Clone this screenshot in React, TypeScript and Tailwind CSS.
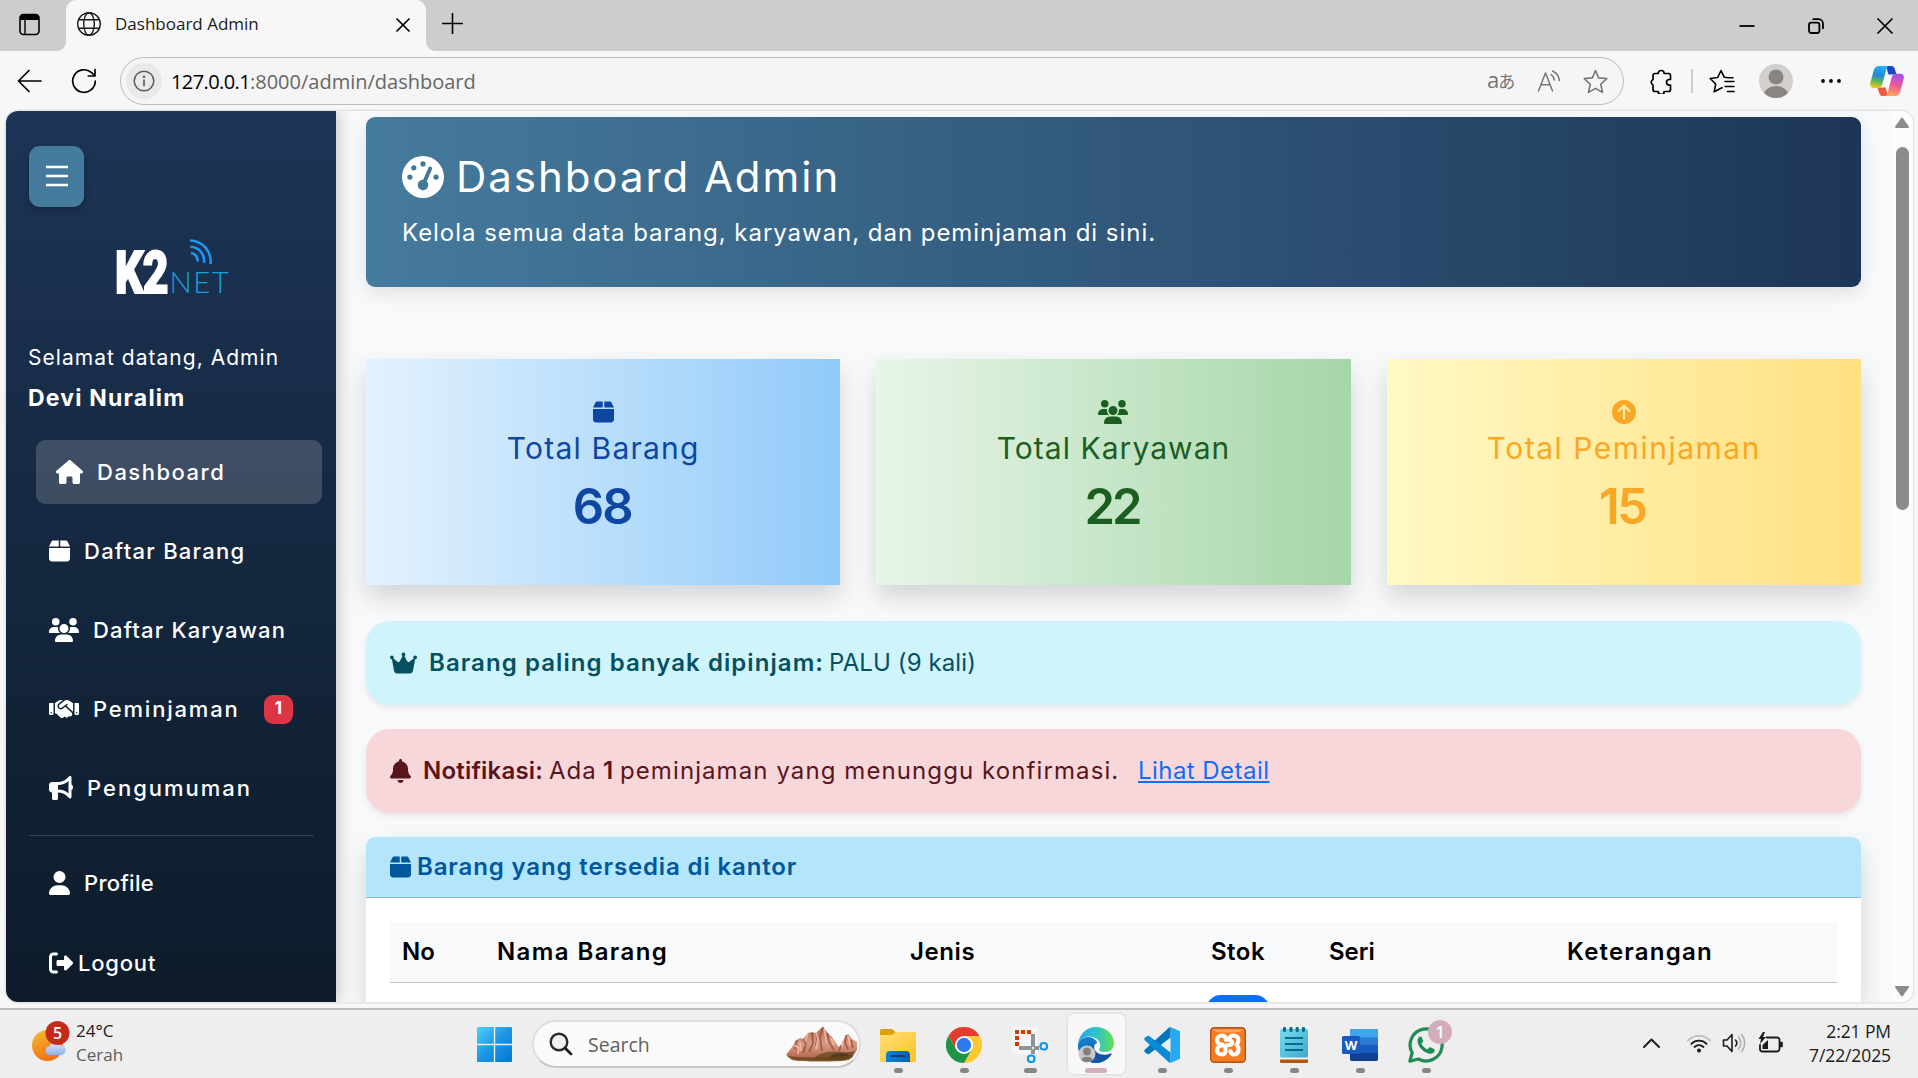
import React from 'react';
import {
  FaBell,
  FaBox,
  FaBullhorn,
  FaCircleArrowUp,
  FaCrown,
  FaGaugeHigh,
  FaHandshake,
  FaHouse,
  FaRightFromBracket,
  FaUser,
  FaUsers,
} from 'react-icons/fa6';

const stroke = { fill: 'none', stroke: 'currentColor', strokeLinecap: 'round', strokeLinejoin: 'round' } as const;

const STAR = 'M12 1.5 L15 8.5 L22.8 9.2 L17 14.6 L18.8 22.4 L12 18.6 L5.2 22.4 L7 14.6 L1.2 9.2 L9 8.5 Z';

function TabStrip() {
  return (
    <div className="flex h-[51px] shrink-0 bg-[#cdcdcd]">
      <div className="flex w-[66px] items-center pb-[3px] pl-[18px]">
        <svg className="h-[23px] w-[23px]" viewBox="0 0 23 23">
          <rect x="2" y="1.5" width="19" height="20" rx="3.5" {...stroke} strokeWidth="1.6" />
          <path d="M2 7V4.5a3 3 0 0 1 3-3h13a3 3 0 0 1 3 3V7z" />
          <path d="M7 7v14" {...stroke} strokeWidth="1.4" />
        </svg>
      </div>
      <div className="relative flex w-[360px] items-center rounded-t-[10px] bg-[#f7f7f7] pb-[3px] pl-[10px]">
        <svg className="absolute bottom-0 -left-[9px] h-[9px] w-[9px]" viewBox="0 0 9 9">
          <path d="M9 0V9H0A9 9 0 0 0 9 0Z" fill="#f7f7f7" />
        </svg>
        <svg className="absolute -right-[9px] bottom-0 h-[9px] w-[9px]" viewBox="0 0 9 9">
          <path d="M0 0V9H9A9 9 0 0 1 0 0Z" fill="#f7f7f7" />
        </svg>
        <svg className="h-[26px] w-[26px] text-[#1b1b1b]" viewBox="0 0 26 26">
          <g {...stroke} strokeWidth="1.4">
            <circle cx="13" cy="13" r="11.3" />
            <ellipse cx="13" cy="13" rx="5.3" ry="11.3" />
            <path d="M2.6 8.7h20.8M2.6 17.3h20.8" />
          </g>
        </svg>
        <span className="ml-[13px] flex-1 text-[17px] text-[#1b1b1b]">Dashboard Admin</span>
        <svg className="mt-[2px] mr-[16px] h-[14px] w-[14px]" viewBox="0 0 14 14">
          <path d="M1 1 13 13M13 1 1 13" {...stroke} strokeWidth="1.7" />
        </svg>
      </div>
      <div className="flex flex-1 items-center pb-[4px] pl-[16px]">
        <svg className="h-[21px] w-[21px]" viewBox="0 0 21 21">
          <path d="M10.5 0.5v20M0.5 10.5h20" {...stroke} strokeWidth="1.6" />
        </svg>
      </div>
      <div className="flex items-center gap-[53px] pr-[25px]">
        <svg className="h-4 w-4" viewBox="0 0 16 16">
          <path d="M0.5 8h15" stroke="black" strokeWidth="1.8" />
        </svg>
        <svg className="h-4 w-4" viewBox="0 0 16 16">
          <g {...stroke} strokeWidth="1.8">
            <rect x="1" y="4.6" width="10.4" height="10.4" rx="2.2" />
            <path d="M5.2 1.2h5.3a4.5 4.5 0 0 1 4.5 4.5v4.6" />
          </g>
        </svg>
        <svg className="h-4 w-4" viewBox="0 0 16 16">
          <path d="M1 1 15 15M15 1 1 15" {...stroke} strokeWidth="1.7" />
        </svg>
      </div>
    </div>
  );
}

function Copilot() {
  return (
    <svg className="h-[32px] w-[34px]" viewBox="0 0 34 32">
      <defs>
        <linearGradient id="cpA" x1="0.5" y1="0" x2="0.3" y2="1">
          <stop offset="0" stopColor="#22b4f5" />
          <stop offset="0.4" stopColor="#1f86dc" />
          <stop offset="0.7" stopColor="#5cb85a" />
          <stop offset="1" stopColor="#f5cc10" />
        </linearGradient>
        <linearGradient id="cpB" x1="0.6" y1="0" x2="0.4" y2="1">
          <stop offset="0" stopColor="#a14df0" />
          <stop offset="0.5" stopColor="#ee5a95" />
          <stop offset="1" stopColor="#ffa45c" />
        </linearGradient>
      </defs>
      <path d="M16 1h5.5c2 0 2.8 1.3 3.4 3.2L26.5 9.5h-8z" fill="#1a46c4" />
      <path d="M18 31h-5.5c-2 0-2.8-1.3-3.4-3.2L7.5 22.5h8z" fill="#ee5a3a" />
      <path d="M9 1h10.5c-2 0-2.7 1.5-3.2 3.2L12.6 18c-.8 3.3-2 5-4.6 5H4c-3.2 0-4.5-2.2-3.6-5.5L3.7 5.5C4.6 2.5 6 1 9 1z" fill="url(#cpA)" />
      <path d="M25 31H14.5c2 0 2.7-1.5 3.2-3.2L21.4 13.5c.8-3.3 2-4.7 4.6-4.7h4c3.2 0 4.5 2.2 3.6 5.5L30.3 26.5C29.4 29.5 28 31 25 31z" fill="url(#cpB)" />
    </svg>
  );
}

function Toolbar() {
  return (
    <div className="flex h-[60px] shrink-0 items-center bg-[#f7f7f7] pl-[17px]">
      <svg className="h-[24px] w-[25px]" viewBox="0 0 25 24">
        <path d="M24 12H1.5M12 1.5 1.5 12 12 22.5" {...stroke} strokeWidth="1.7" />
      </svg>
      <svg className="ml-[29px] h-[26px] w-[26px]" viewBox="0 0 26 26">
        <path d="M24.3 13A11.3 11.3 0 1 1 20.6 4.7L24 8M24 1.5V8H17.3" {...stroke} strokeWidth="1.7" />
      </svg>
      <div className="ml-[23px] flex h-[48px] w-[1504px] items-center rounded-full border border-[#bdbdbd] bg-[#f5f5f5] pl-[5px]">
        <div className="flex h-[36px] w-[36px] items-center justify-center rounded-full bg-[#e9e9e9]">
          <svg className="h-[22px] w-[22px] text-[#5c5c5c]" viewBox="0 0 22 22">
            <circle cx="11" cy="11" r="9.8" {...stroke} strokeWidth="1.5" />
            <path d="M11 10v5.5" {...stroke} strokeWidth="1.7" />
            <circle cx="11" cy="6.8" r="1.2" fill="currentColor" />
          </svg>
        </div>
        <span className="mt-[1px] ml-[9px] flex-1 text-[20px] text-[#666]">
          <span className="tracking-[-0.6px] text-black">127.0.0.1</span>:8000/admin/dashboard
        </span>
        <div className="flex items-center text-[#757575]">
          <span className="w-[50px] pb-[5px] font-['Open_Sans','Noto_Sans_CJK_JP',sans-serif] text-[22px] leading-none tracking-[-1px]">
            a<span className="text-[17px]">あ</span>
          </span>
          <svg className="h-[24px] w-[24px]" viewBox="0 0 24 24">
            <g {...stroke} strokeWidth="1.5">
              <path d="M1.5 22 8.5 4l7 18M4 15.7h9" />
              <path d="M14 5.5c2 1.4 3 3.2 3.2 5.5M15.500 2c4 1.7 6.5 5.2 6.8 9.5" />
            </g>
          </svg>
          <svg className="mr-[15px] ml-[22px] h-[25px] w-[25px]" viewBox="0 0 24 24">
            <path d={STAR} {...stroke} strokeWidth="1.5" />
          </svg>
        </div>
      </div>
      <svg className="ml-[25px] h-[25px] w-[24px]" viewBox="0 0 24 25">
        <path
          d="M6 4.5h3.2a3 3 0 0 1 6 0h4.3a2 2 0 0 1 2 2v4h-1.2a2.8 2.8 0 0 0 0 5.6h1.2v4.4a2 2 0 0 1-2 2h-4.3a3 3 0 0 1-6 0H6a2 2 0 0 1-2-2V16a3 3 0 0 1 0-5.500v-4a2 2 0 0 1 2-2z"
          {...stroke}
          strokeWidth="1.7"
        />
      </svg>
      <div className="ml-[18px] h-[24px] w-[2px] bg-[#cfcfcf]" />
      <svg className="ml-[16px] h-[25px] w-[26px]" viewBox="0 0 26 25">
        <path
          d="M19.5 8.7 15.3 8.3 12 1.5 8.7 8.5 1.2 9.5 6.7 15 5.2 22.8 13 18.7M16 12.5h9M16 17.5h9M18.5 22.5H25M19.5 8.7H24"
          {...stroke}
          strokeWidth="1.6"
        />
      </svg>
      <svg className="ml-[24px] h-[34px] w-[34px]" viewBox="0 0 34 34">
        <defs>
          <clipPath id="avatar">
            <circle cx="17" cy="17" r="17" />
          </clipPath>
        </defs>
        <g clipPath="url(#avatar)">
          <rect width="34" height="34" fill="#d2d0ce" />
          <circle cx="17" cy="13" r="7.5" fill="#8a8582" />
          <ellipse cx="17" cy="32" rx="12.5" ry="10" fill="#8a8582" />
        </g>
      </svg>
      <svg className="ml-[27px] h-[6px] w-[22px]" viewBox="0 0 22 6">
        <circle cx="3" cy="3" r="1.9" />
        <circle cx="11" cy="3" r="1.9" />
        <circle cx="19" cy="3" r="1.9" />
      </svg>
      <div className="ml-[28px]">
        <Copilot />
      </div>
    </div>
  );
}

function Logo() {
  return (
    <svg className="h-[58px] w-[118px] overflow-visible" viewBox="0 0 118 58">
      <text
        transform="translate(0 56) scale(0.755 1)"
        fontFamily="Roboto, sans-serif"
        fontWeight="900"
        fontSize="59"
        letterSpacing="-1"
        fill="white"
        stroke="white"
        strokeWidth="1.8"
      >
        K2
      </text>
      <text x="54.5" y="56" fontFamily="Lato, sans-serif" fontWeight="300" fontSize="29.5" letterSpacing="1.4" fill="#16a0dc">
        NET
      </text>
      <g fill="none" stroke="#1c97f5" strokeWidth="2.6">
        <path d="M75 3.5a21 21 0 0 1 20.5 23.5" />
        <path d="M75.5 9.8a14 14 0 0 1 13.5 16" />
        <path d="M76 16a7.5 7.5 0 0 1 6.5 8.5" />
      </g>
    </svg>
  );
}

function NavItem({ icon, children, gap = 'gap-[14px]' }: { icon: React.ReactNode; children: React.ReactNode; gap?: string }) {
  return (
    <a className={`flex h-[64px] items-center pl-[20px] text-[22px] font-medium ${gap}`}>
      {icon}
      {children}
    </a>
  );
}

function Sidebar() {
  return (
    <aside className="z-10 flex w-[330px] shrink-0 flex-col bg-linear-to-b from-[#1d3557] to-[#0d1b2a] pl-[23px] text-white shadow-[3px_0_15px_rgba(0,0,0,0.2)]">
      <button className="mt-[35px] flex h-[61px] w-[55px] items-center justify-center rounded-[11px] bg-[#457b9d] shadow-[0_3px_9px_rgba(0,0,0,0.25)]">
        <svg className="mb-[2px] h-[22px] w-[22px]" viewBox="0 0 22 22">
          <path d="M0 2h22M0 11h22M0 20h22" stroke="white" strokeWidth="2.6" />
        </svg>
      </button>
      <div className="mt-[30px] pl-[86px]">
        <Logo />
      </div>
      <p className="mt-[47px] -ml-px text-[21px] leading-[32px] tracking-[1.03px]">Selamat datang, Admin</p>
      <p className="mt-[8px] -ml-px text-[23px] leading-[32px] font-bold tracking-[1.2px]">Devi Nuralim</p>
      <nav className="mt-[26px] flex flex-col gap-[15px]">
        <div className="ml-[7px] w-[286px] rounded-[9px] bg-white/17">
          <NavItem icon={<FaHouse className="h-6 w-[27px]" />}>
            <span className="tracking-[1.5px]">Dashboard</span>
          </NavItem>
        </div>
        <NavItem icon={<FaBox className="h-6 w-[21px]" />}>
          <span className="tracking-[1.25px]">Daftar Barang</span>
        </NavItem>
        <NavItem icon={<FaUsers className="h-6 w-[30px]" />}>
          <span className="tracking-[1.15px]">Daftar Karyawan</span>
        </NavItem>
        <NavItem icon={<FaHandshake className="h-6 w-[30px]" />}>
          <span className="w-[145px] tracking-[1.8px]">Peminjaman</span>
          <span className="ml-[12px] flex h-[29px] w-[29px] items-center justify-center rounded-[9px] bg-[#dc3545] text-[17px] font-bold">
            1
          </span>
        </NavItem>
        <NavItem icon={<FaBullhorn className="h-6 w-6" />}>
          <span className="tracking-[2px]">Pengumuman</span>
        </NavItem>
      </nav>
      <div className="mt-[15px] h-px w-[285px] shrink-0 bg-white/15" />
      <div className="mt-[15px] flex flex-col gap-[16px]">
        <NavItem icon={<FaUser className="h-6 w-[21px]" />}>
          <span className="tracking-[0.3px]">Profile</span>
        </NavItem>
        <NavItem icon={<FaRightFromBracket className="h-6 w-6" />} gap="gap-[5px]">
          <span className="tracking-[0.8px]">Logout</span>
        </NavItem>
      </div>
    </aside>
  );
}

function StatCard({ tone, icon, label, value }: { tone: string; icon: React.ReactNode; label: React.ReactNode; value: React.ReactNode }) {
  return (
    <div className={`flex h-[226px] flex-1 flex-col items-center pt-[41px] shadow-[0_12px_24px_rgba(0,0,0,0.15)] ${tone}`}>
      {icon}
      <div className="mt-[4px] text-[30px] leading-[40px]">{label}</div>
      <div className="mt-[9px] text-[49px] leading-[60px] font-semibold">{value}</div>
    </div>
  );
}

function Content() {
  return (
    <main className="flex flex-1 flex-col overflow-hidden bg-[#f8f9fb] pr-[30px] pl-[30px]">
      <section className="mt-[6px] h-[170px] shrink-0 rounded-[9px] bg-linear-to-r/srgb from-[#457b9d] to-[#1d3557] pl-[36px] text-white shadow-[0_6px_18px_rgba(0,0,0,0.1)]">
        <h1 className="flex items-center gap-[12px] pt-[33px] text-[42px] leading-[54px] tracking-[1.95px]">
          <FaGaugeHigh className="h-[42px] w-[42px]" />
          Dashboard Admin
        </h1>
        <p className="mt-[11px] text-[24px] leading-[36px] tracking-[0.96px]">
          Kelola semua data barang, karyawan, dan peminjaman di sini.
        </p>
      </section>
      <section className="mt-[72px] flex shrink-0 gap-[36px]">
        <StatCard
          tone="bg-linear-to-r/srgb from-[#e3f2fd] to-[#90caf9] text-[#0d47a1]"
          icon={<FaBox className="h-6 w-[21px]" />}
          label={<span className="tracking-[1.2px]">Total Barang</span>}
          value={<span className="-ml-[2px] tracking-[-2px]">68</span>}
        />
        <StatCard
          tone="bg-linear-to-r/srgb from-[#e8f5e9] to-[#a5d6a7] text-[#1b5e20]"
          icon={<FaUsers className="h-6 w-[30px]" />}
          label={<span className="tracking-[1.05px]">Total Karyawan</span>}
          value={<span className="-ml-[3px] tracking-[-3px]">22</span>}
        />
        <StatCard
          tone="bg-linear-to-r/srgb from-[#fff9c4] to-[#ffe082] text-[#f9a825]"
          icon={<FaCircleArrowUp className="h-6 w-6" />}
          label={<span className="tracking-[1.5px]">Total Peminjaman</span>}
          value={<span className="-ml-[3px] tracking-[-2.5px]">15</span>}
        />
      </section>
      <section className="mt-[36px] flex h-[84px] shrink-0 items-center rounded-[24px] bg-[#cff4fc] pl-[24px] text-[24px] whitespace-pre text-[#055160] shadow-[0_3px_6px_rgba(0,0,0,0.075)]">
        <FaCrown className="mr-[12px] h-6 w-[27px]" />
        <b className="w-[400px] font-semibold tracking-[1.07px]">Barang paling banyak dipinjam:</b>
        <span className="tracking-[0.1px]">PALU (9 kali)</span>
      </section>
      <section className="mt-[24px] flex h-[84px] shrink-0 items-center rounded-[24px] bg-[#f8d7da] pl-[24px] text-[24px] text-[#58151c] shadow-[0_3px_6px_rgba(0,0,0,0.075)]">
        <FaBell className="mr-[12px] h-6 w-[21px]" />
        <b className="w-[126px] font-semibold tracking-[0.2px]">Notifikasi:</b>
        <span className="w-[54px] tracking-[1px]">Ada</span>
        <b className="w-[17px] font-semibold">1</b>
        <span className="w-[518px] tracking-[1.09px]">peminjaman yang menunggu konfirmasi.</span>
        <a className="tracking-[0.45px] text-[#0d6efd] underline">Lihat Detail</a>
      </section>
      <section className="mt-[24px] flex flex-1 flex-col overflow-hidden rounded-t-[9px] bg-white shadow-[0_12px_24px_rgba(0,0,0,0.15)]">
        <h2 className="flex h-[61px] shrink-0 items-center gap-[6px] border-b border-[#93b9d1] bg-[#b3e5fc] pl-[24px] text-[24px] font-semibold tracking-[0.87px] text-[#01579b]">
          <FaBox className="h-6 w-[21px]" />
          Barang yang tersedia di kantor
        </h2>
        <div className="mx-[24px] mt-[24px] grid h-[61px] shrink-0 grid-cols-[95px_413px_301px_118px_238px_1fr] items-center border-b border-[#c3c6c9] bg-[#f8f9fa] pl-[12px] text-[24px] font-semibold text-black">
          <span>No</span>
          <span className="tracking-[1.4px]">Nama Barang</span>
          <span className="tracking-[0.6px]">Jenis</span>
          <span className="tracking-[0.5px]">Stok</span>
          <span>Seri</span>
          <span className="tracking-[1.2px]">Keterangan</span>
        </div>
        <div className="mt-[12px] ml-[840px] h-[36px] w-[64px] shrink-0 rounded-[15px] bg-[#0d6efd]" />
      </section>
    </main>
  );
}

function Scrollbar() {
  return (
    <div className="flex w-[22px] shrink-0 flex-col items-center bg-[#fcfcfc]">
      <svg className="mt-[6px] h-[12px] w-[16px]" viewBox="0 0 16 12">
        <path d="M8 1.5 14 10H2z" fill="#8b8b8b" stroke="#8b8b8b" strokeWidth="2" strokeLinejoin="round" />
      </svg>
      <div className="mt-[18px] h-[363px] w-[13px] rounded-full bg-[#8b8b8b]" />
      <svg className="mt-auto mb-[5px] h-[12px] w-[16px]" viewBox="0 0 16 12">
        <path d="M8 10.5 2 2h12z" fill="#8b8b8b" stroke="#8b8b8b" strokeWidth="2" strokeLinejoin="round" />
      </svg>
    </div>
  );
}

function Weather() {
  return (
    <svg className="mt-[2px] h-[42px] w-[40px]" viewBox="0 0 40 42">
      <defs>
        <linearGradient id="sun" x1="0.2" y1="0" x2="0.6" y2="1">
          <stop offset="0" stopColor="#f2b92c" />
          <stop offset="1" stopColor="#f26d12" />
        </linearGradient>
        <linearGradient id="cloud" x1="0" y1="0" x2="0" y2="1">
          <stop offset="0" stopColor="#dbe7fb" />
          <stop offset="1" stopColor="#8db1ee" />
        </linearGradient>
      </defs>
      <circle cx="15.500" cy="24.500" r="15.500" fill="url(#sun)" />
      <path d="M17 34a4.500 4.500 0 0 1 .5-8.800 6.500 6.500 0 0 1 11.500-.8 4.800 4.800 0 0 1 0 9.600z" fill="url(#cloud)" />
      <circle cx="25.500" cy="12" r="12" fill="#c42b1c" />
      <text x="25.500" y="17.500" textAnchor="middle" fontFamily="Open Sans, sans-serif" fontWeight="600" fontSize="16" fill="white">
        5
      </text>
    </svg>
  );
}

function WindowsLogo() {
  return (
    <svg className="h-[35px] w-[35px]" viewBox="0 0 35 35">
      <defs>
        <linearGradient id="win" x1="0" y1="0" x2="1" y2="1">
          <stop offset="0" stopColor="#4ed0ff" />
          <stop offset="0.5" stopColor="#1d95e4" />
          <stop offset="1" stopColor="#0078d4" />
        </linearGradient>
      </defs>
      <path
        d="M1 0h15.800v16.800H0V1a1 1 0 0 1 1-1zM18.200 0H34a1 1 0 0 1 1 1v15.800H18.200zM0 18.200h16.800V35H1a1 1 0 0 1-1-1zM18.200 18.200H35V34a1 1 0 0 1-1 1H18.200z"
        fill="url(#win)"
      />
    </svg>
  );
}

function Mountain() {
  return (
    <svg className="h-[36px] w-[74px]" viewBox="0 0 74 36">
      <defs>
        <linearGradient id="rock" x1="0" y1="0" x2="0" y2="1">
          <stop offset="0" stopColor="#b8705a" />
          <stop offset="0.5" stopColor="#dd9a80" />
          <stop offset="1" stopColor="#a8604a" />
        </linearGradient>
      </defs>
      <path
        d="M1 29 7 21l3-6 5-3 3 1 5-6 4-1 4 1 4-4 3-2 4 5 5 5 4 6 3 4 3-3 3-7 3-3 4 5 5 3v8l-5 8c-6 3-50 4-62 0z"
        fill="url(#rock)"
      />
      <path d="M12 14l-2 9M18 13l3 5-3 9M27 7l1 10-4 9M38 1l-3 10 2 14M33 8l-2 12M42 7l2 9 5 8M61 9l-1 8 3 6M56 19l-2 6M66 14l2 8" fill="none" stroke="#6e4038" strokeOpacity="0.6" strokeWidth="1.8" />
      <path d="M23 8l-3 7M31 7l2 5-2 12M39 3l3 14M46 12l3 7M9 19l5 3-1 6M15 16l1 9M63 10l2 9M58 14l-1 7" fill="none" stroke="#f2b79e" strokeWidth="1.6" />
      <path d="M28 33c5-6 18-9 28-7 5 1 10 0 14-1l-3 6c-6 4-24 4-39 2z" fill="#7a5230" />
      <path d="M44 31c5-4 15-5 21-2l-4 4c-6 1-13 1-17-2z" fill="#4e3a26" />
      <path d="M2 30c14 2 36 2 66-1l-4 5c-8 2-50 2-57 0z" fill="#6a4417" opacity="0.8" />
    </svg>
  );
}

function ExplorerIcon() {
  return (
    <svg className="h-9 w-9" viewBox="0 0 36 36">
      <defs>
        <linearGradient id="fold" x1="0" y1="0" x2="1" y2="1">
          <stop offset="0" stopColor="#ffdf73" />
          <stop offset="1" stopColor="#fcc32a" />
        </linearGradient>
        <linearGradient id="foldB" x1="0" y1="0" x2="1" y2="0">
          <stop offset="0" stopColor="#0a84dc" />
          <stop offset="1" stopColor="#0560b0" />
        </linearGradient>
      </defs>
      <path d="M0 3.500A1.500 1.500 0 0 1 1.500 2H12l4 3.500V12H0z" fill="#dda00c" />
      <path d="M0 8h12l4-3h19a1 1 0 0 1 1 1v28a1 1 0 0 1-1 1H1a1 1 0 0 1-1-1z" fill="url(#fold)" />
      <path d="M6 35v-7a4 4 0 0 1 4-4h16a4 4 0 0 1 4 4v7z" fill="url(#foldB)" />
      <path d="M11 29h14" stroke="#05427a" strokeWidth="1.8" strokeLinecap="round" />
    </svg>
  );
}

function ChromeIcon() {
  return (
    <svg className="h-9 w-9" viewBox="0 0 36 36">
      <path d="M18 9H33.590A18 18 0 0 1 18 36L25.800 22.500Z" fill="#fcc934" />
      <path d="M18 36A18 18 0 0 1 2.410 9L10.200 22.500 18 27 25.800 22.500Z" fill="#1e9446" />
      <path d="M2.410 9 10.200 22.500 18 9H33.590A18 18 0 0 0 2.410 9Z" fill="#e33b2e" />
      <circle cx="18" cy="18" r="9" fill="white" />
      <circle cx="18" cy="18" r="7.2" fill="#2f7bee" />
    </svg>
  );
}

function SnipIcon() {
  return (
    <svg className="h-9 w-9" viewBox="0 0 36 36">
      <rect x="0" y="0" width="26" height="27" rx="2" fill="#f4f6f7" />
      <path d="M3 5h17M5 3v17" fill="none" stroke="#d83b01" strokeWidth="4" strokeDasharray="4 2" />
      <path d="M7 21h20M21 7v20" fill="none" stroke="#8d9499" strokeWidth="4" />
      <circle cx="21" cy="21" r="1.2" fill="#e8e8e8" />
      <rect x="28.500" y="16" width="6.500" height="6.500" rx="3" fill="none" stroke="#1497e0" strokeWidth="2.2" />
      <rect x="16" y="28.500" width="6.500" height="6.500" rx="3" fill="none" stroke="#1497e0" strokeWidth="2.2" />
    </svg>
  );
}

function EdgeIcon() {
  return (
    <svg className="h-9 w-9" viewBox="0 0 36 36">
      <defs>
        <linearGradient id="eA" x1="0" y1="0.5" x2="1" y2="0.5">
          <stop offset="0" stopColor="#2aa5e0" />
          <stop offset="0.5" stopColor="#2fc2cf" />
          <stop offset="1" stopColor="#62e04e" />
        </linearGradient>
        <linearGradient id="eB" x1="0" y1="0" x2="0.4" y2="1">
          <stop offset="0" stopColor="#1488d8" />
          <stop offset="1" stopColor="#0f5ab0" />
        </linearGradient>
      </defs>
      <path d="M0 19a18 18 0 0 0 18 17c6 0 12-3.500 15.500-8.500.5-.9-.3-1.500-1.100-1.100C28 28.500 22 28 19 25.500c-3-2.500-4-6-1.500-9.500C14 8.500 2 9 0 19z" fill="#1253a4" />
      <path d="M0 18C1 11 9 8.500 14.500 11c3 1.400 4.500 3.500 4.500 5-2.500 1-5 3.500-5 7.500 0 5 3 9.500 8 12-1.300.4-2.600.5-4 .5C8 36 0 28 0 18z" fill="url(#eB)" />
      <path d="M0 18C.5 8 8 0 18 0c11 0 18 8 18 16 0 6-4 9-9 9-4 0-6-1.300-6-2.300 0-.8 1.300-1.500 1.300-4C22.300 13 17 9.500 11 9.500 5 9.500.8 13 0 18z" fill="url(#eA)" />
      <circle cx="9" cy="27" r="8.5" fill="#c9c7c5" />
      <circle cx="9" cy="24.500" r="3.9" fill="#85807d" />
      <path d="M3.200 33a6 4.500 0 0 1 11.600 0 8.500 8.500 0 0 1-11.600 0z" fill="#85807d" />
    </svg>
  );
}

function CodeIcon() {
  return (
    <svg className="h-9 w-9" viewBox="0 0 36 36">
      <path d="M26.500 0 36 4.300V31.700L26.500 36z" fill="#25a9f2" />
      <path d="M26.500 0V10.500L4.500 27.500 1 25.500C0 24.500 0 23.500 1 22.500L24 1.500C25 .5 25.800.2 26.500 0z" fill="#0277bd" />
      <path d="M26.500 36V25.500L4.500 8.500 1 10.500C0 11.500 0 12.500 1 13.500L24 34.500c1 1 1.800 1.300 2.500 1.500z" fill="#0b8ad6" />
    </svg>
  );
}

function XamppIcon() {
  return (
    <svg className="h-9 w-9" viewBox="0 0 36 36">
      <rect x="0.700" y="0.700" width="34.600" height="34.600" rx="3.500" fill="#fa7a22" stroke="#ad5418" strokeWidth="1.4" />
      <path d="M3 2.500h30c0 2-5 3-15 3s-15-1-15-3z" fill="#fcb78a" opacity="0.7" />
      <g fill="none" stroke="white" strokeWidth="4.2" strokeLinecap="round" strokeLinejoin="round">
        <path d="M12.500 17.500C9 18 7 15.500 7 13s2-4.500 5-4.500 4 2 4 4.500M12 18.500c-3.500.5-5 3-5 5s2 4 4.500 4 4-1.500 4-4V20c0-1.500 1-2 2.500-2s3.500 0 4-1.500c.6-1.500-.5-3-2.500-3.500" />
        <path d="M19.500 12c0-2.200 1.800-3.500 4.200-3.500 2.800 0 4.800 1.800 4.800 4.500 0 2-.8 3.500-2 4.800 1.500 1.200 2.200 3 2 5.200-.2 2.700-2 4.500-4.300 4.500s-3.700-1.500-3.700-3.500" />
      </g>
    </svg>
  );
}

function NotepadIcon() {
  return (
    <svg className="h-9 w-9" viewBox="0 0 36 36">
      <defs>
        <linearGradient id="pad" x1="0" y1="0" x2="1" y2="1">
          <stop offset="0" stopColor="#76dcee" />
          <stop offset="1" stopColor="#3fa9cf" />
        </linearGradient>
      </defs>
      <path d="M4 31h28v3.500a1.500 1.500 0 0 1-1.500 1.500h-25A1.500 1.500 0 0 1 4 34.500z" fill="#b4560f" />
      <rect x="4" y="29" width="28" height="3.500" fill="#f3f3f3" />
      <rect x="4" y="2" width="28" height="28.500" rx="1.500" fill="url(#pad)" />
      <path d="M9 11h18M9 17h18M9 23h18" stroke="#086a8c" strokeWidth="2" />
      <path d="M8.500 1.500v2M15 1.500v2M21.200 1.500v2M27.500 1.500v2" stroke="#086a8c" strokeWidth="3.2" strokeLinecap="round" />
    </svg>
  );
}

function WordIcon() {
  return (
    <svg className="h-9 w-9" viewBox="0 0 36 36">
      <rect x="8" y="2" width="28" height="32" rx="1.800" fill="#103f91" />
      <path d="M8 10h28v8H8z" fill="#2b7cd3" />
      <path d="M8 18h28v8H8z" fill="#185abd" />
      <path d="M9.800 2h24.400A1.800 1.800 0 0 1 36 3.800V10.500H8V3.800A1.800 1.800 0 0 1 9.800 2z" fill="#41a5ee" />
      <rect x="0" y="9" width="18" height="18" rx="1.600" fill="#185abd" />
      <text x="9" y="22.500" textAnchor="middle" fontFamily="Open Sans, sans-serif" fontWeight="700" fontSize="13" fill="white">
        W
      </text>
    </svg>
  );
}

function WhatsAppIcon() {
  return (
    <svg className="h-9 w-9 overflow-visible" viewBox="0 0 36 36">
      <path d="M1.800 34.200 4.200 25.800A16 16 0 1 1 10.500 32z" fill="none" stroke="#1f8b57" strokeWidth="3.2" strokeLinejoin="round" />
      <path
        d="M12.500 9.500c-1.500 0-3 1.800-3 4.200 0 6 7 13 13 13 2.500 0 4.300-1.500 4.300-3.400 0-.6-.3-1-.8-1.300l-3.600-1.700c-.6-.3-1.100-.1-1.500.4l-1.300 1.700c-2.600-.8-5.300-3.400-6.300-5.900l1.500-1.600c.4-.4.500-.9.300-1.400l-1.400-3.300c-.3-.5-.7-.7-1.200-.7z"
        fill="#1f8b57"
      />
      <circle cx="32" cy="5" r="12" fill="#d3adbb" />
      <text x="32" y="11" textAnchor="middle" fontFamily="Open Sans, sans-serif" fontWeight="600" fontSize="16" fill="white">
        1
      </text>
    </svg>
  );
}

function TaskSlot({ children, bar = 'w-[9px] bg-[#868686]', active = false }: { children: React.ReactNode; bar?: string; active?: boolean }) {
  return (
    <div className="flex w-[66px] justify-center">
      <div className={`flex h-[60px] w-[57px] flex-col items-center rounded-[6px] pt-[13px] ${active ? 'bg-[#f8f8f8] shadow-[0_0_0_1.5px_#e3e3e3]' : ''}`}>
        {children}
        <div className={`mt-[5px] h-[5px] shrink-0 rounded-full ${bar}`} />
      </div>
    </div>
  );
}

function Tray() {
  return (
    <div className="ml-auto flex items-center pr-[27px] pb-[2px] text-[#1b1b1b]">
      <svg className="h-[10px] w-[17px]" viewBox="0 0 17 10">
        <path d="M1 9 8.500 1.500 16 9" {...stroke} strokeWidth="1.9" />
      </svg>
      <svg className="ml-[27px] h-[20px] w-[24px]" viewBox="0 0 24 20">
        <g {...stroke} strokeWidth="1.8">
          <path d="M1 7.500a15.500 15.500 0 0 1 22 0" stroke="#bdbdbd" />
          <path d="M4.300 10.800a11 11 0 0 1 15.400 0M7.500 14a6.500 6.500 0 0 1 9 0" />
        </g>
        <circle cx="12" cy="17.500" r="2" fill="currentColor" />
      </svg>
      <svg className="ml-[11px] h-[22px] w-[25px]" viewBox="0 0 25 22">
        <g {...stroke} strokeWidth="1.6">
          <path d="M1.500 8h3.500l5-5.500v17L5 14H1.500z" />
          <path d="M13.500 8a4.500 4.500 0 0 1 0 6" />
          <path d="M16.500 5a9 9 0 0 1 0 12M19.500 2.500a13 13 0 0 1 0 17" stroke="#b0b0b0" />
        </g>
      </svg>
      <svg className="ml-[11px] h-[22px] w-[26px]" viewBox="0 0 26 22">
        <path d="M8.500 5.500H19a2.500 2.500 0 0 1 2.500 2.500v9a2.500 2.500 0 0 1-2.500 2.500H4.500A2.500 2.500 0 0 1 2 17v-4" {...stroke} strokeWidth="1.8" />
        <path d="M22.500 10.500h1.500v4h-1.500z" {...stroke} strokeWidth="1.6" />
        <path d="M5 0 0.500 7H3l-1 5 6-7H5L7 0zM4.500 13 10 8v9H4.500z" fill="currentColor" />
      </svg>
      <div className="ml-[23px] w-[84px] text-right text-[17.5px] leading-[24px] tracking-[-0.1px] whitespace-nowrap">
        <div>2:21 PM</div>
        <div>7/22/2025</div>
      </div>
    </div>
  );
}

function Taskbar() {
  return (
    <footer className="flex h-[70px] shrink-0 items-center border-t-2 border-[#bdbdbd] bg-[#eeeeee]">
      <div className="flex w-[477px] items-center gap-[4px] pb-[7px] pl-[32px] text-[17px] leading-[24px]">
        <Weather />
        <div className="pt-[5px]">
          <div className="text-[#1b1b1b]">24°C</div>
          <div className="text-[#5c5c5c]">Cerah</div>
        </div>
      </div>
      <WindowsLogo />
      <div className="ml-[20px] flex h-[48px] w-[329px] items-center rounded-full border-2 border-[#dedede] border-b-[#c6c6c6] bg-[#fafafa] pl-[15px]">
        <svg className="h-[24px] w-[24px]" viewBox="0 0 24 24">
          <circle cx="10" cy="10" r="8.3" fill="#eef0f2" stroke="#2b2b2b" strokeWidth="2.4" />
          <path d="M16 16l6 6" stroke="#1b1b1b" strokeWidth="2.8" strokeLinecap="round" />
        </svg>
        <span className="mt-px ml-[15px] flex-1 text-[19.5px] text-[#5f5f5f]">Search</span>
        <Mountain />
      </div>
      <div className="ml-[4px] flex">
        <TaskSlot><ExplorerIcon /></TaskSlot>
        <TaskSlot><ChromeIcon /></TaskSlot>
        <TaskSlot bar="w-[13px] bg-[#868686]"><SnipIcon /></TaskSlot>
        <TaskSlot bar="w-[22px] bg-[#d3adbb]" active><EdgeIcon /></TaskSlot>
        <TaskSlot><CodeIcon /></TaskSlot>
        <TaskSlot><XamppIcon /></TaskSlot>
        <TaskSlot><NotepadIcon /></TaskSlot>
        <TaskSlot><WordIcon /></TaskSlot>
        <TaskSlot><WhatsAppIcon /></TaskSlot>
      </div>
      <Tray />
    </footer>
  );
}

export default function App() {
  return (
    <div className="flex h-[1078px] w-[1918px] flex-col overflow-hidden bg-[#f7f7f7] font-['Open_Sans','Noto_Sans',sans-serif]">
      <TabStrip />
      <Toolbar />
      <div className="mb-[6px] ml-[6px] flex min-h-0 w-[1907px] flex-1 overflow-hidden rounded-[12px] font-['Inter','Noto_Sans',sans-serif] shadow-[0_0_0_1.5px_#e4e4e4]">
        <Sidebar />
        <Content />
        <Scrollbar />
      </div>
      <Taskbar />
    </div>
  );
}
